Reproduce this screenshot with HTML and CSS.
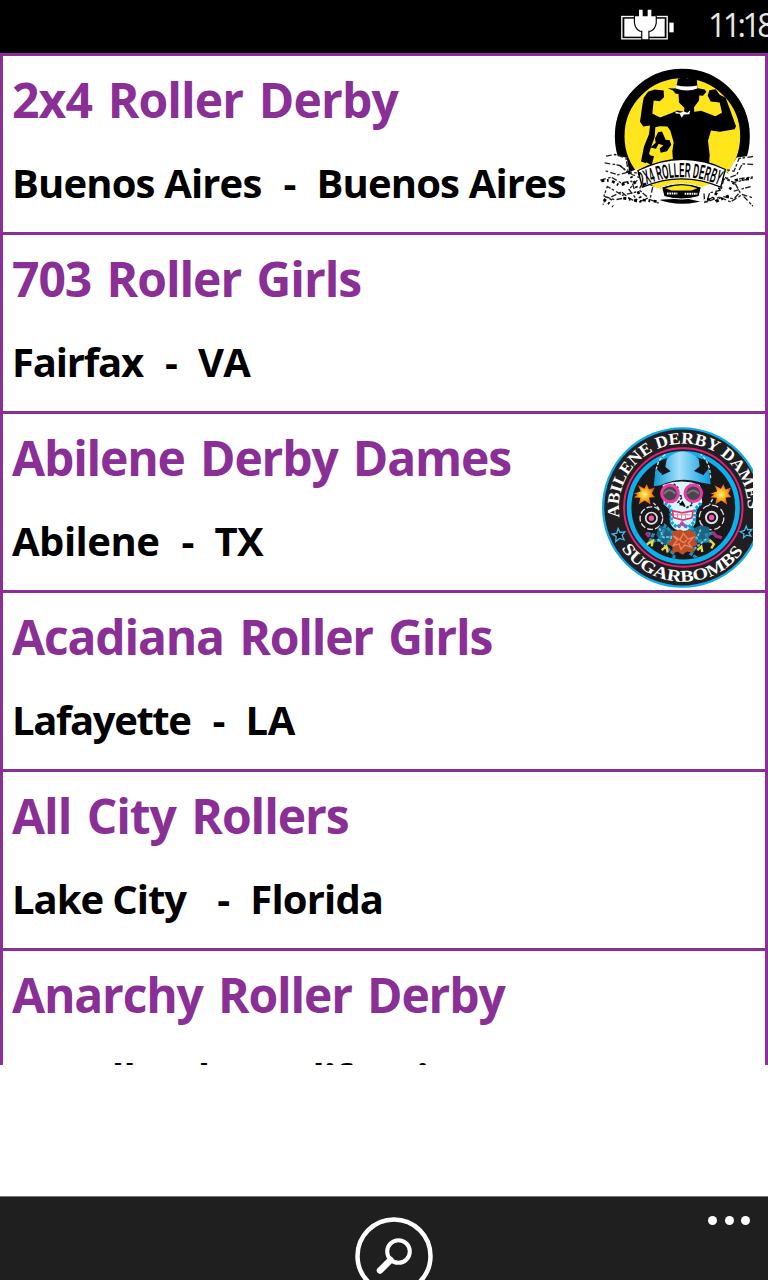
FILE: index.html
```html
<!DOCTYPE html>
<html lang="en">
<head>
<meta charset="utf-8">
<title>Roller Derby Leagues</title>
<link rel="stylesheet" href="styles.css">
</head>
<body>
<div class="phone">
  <header class="status">
    <svg class="battery" viewBox="93 28 162 93" aria-label="Charging">
      <rect x="95.500" y="50.500" width="136" height="67" fill="none" stroke="#fff" stroke-width="4"/>
      <rect x="103" y="57" width="121" height="54" fill="#fff"/>
      <rect x="238" y="69" width="13" height="29" fill="#fff"/>
      <path d="M147 30h11v20h15V30h11v20h13v20q-3 17-16 23h-6v26h-18V93h-6q-13-6-16-23V50h12z" fill="#fff" stroke="#000" stroke-width="7"/>
      <path d="M147 30h11v20h15V30h11v20h13v20q-3 17-16 23h-6v26h-18V93h-6q-13-6-16-23V50h12z" fill="#fff"/>
    </svg>
    <span class="time">11:18</span>
  </header>

  <main class="list">
    <article class="row">
      <div class="info">
        <h2 class="name t-normal">2x4 Roller Derby</h2>
        <p class="place"><span>Buenos Aires</span><span class="dash">-</span><span>Buenos Aires</span></p>
      </div>
      <svg class="logo logo-2x4" viewBox="30 40 459 425">
        <circle cx="277" cy="244" r="188" fill="#ffe51c" stroke="#000" stroke-width="29"/>
        <path d="M161 129l13-18 20-7 27 3 1 20-13 12-18-2-4 39 23 12 37-14 15-7 34 7 37-6 43 16 20-10-7-31-27-3-9-17 5-17 19-3 12 17 18 9 14 38 17 47-4 9-44 8-27-4-9 31 5 42-2 34H250l-3-45 4-27-10-34-9-13-23-1-13 3-2 30-11 30-15 48-15-5 9-45 15-37 3-26-20 3-10-14 7-50z"/>
        <path d="M265 108l2 35 16 16-1 19h31l-1-21 15-20 2-29z"/>
        <path d="M257 103l7-31 16-5 13 4 12-4 15 5 3 31z"/>
        <path d="M258 91q32 8 64 1v15q-32 9-65 0z" fill="#fff"/>
        <path d="M233 100l25 1q34 12 66-1l20 4 5 7-10 12-48-5-34-1-8-10z"/>
        <path d="M256 170l14 4 11-4 11 4 9-8-3 12-16 1-7 10-6-12-12-1z" fill="#fff"/>
        <path d="M204 232l12-2 11 25 12 1 5 14-13 19-19 5-3-13 11-9-14-5-8 15-17-4 16-14-2-13zM160 317l12-31 8 15 12 3-7 27z"/>
        <path d="M48 304l23-5 39 10 8 42 39-12 10 48 100 34 92-33 14-41 39 8 28-47 42-5v153l-31-1-30-15-30 4-38-10-20 7-44-10-73 3-42 10-27-4-43 7-32-14-31 8-38 5 10-30-22-17 3-21-5-29 19-12z" fill="#fff"/>
        <g fill="none" stroke="#222" stroke-width="4" stroke-dasharray="17 7 8 4">
          <path d="M48 304l28-5 32 11 7 42-31 8-41-13M44 324l46 8 21 18 33 5 16 23-13 27 28 24-31 14-32-15-38 7-26-9-9 24M31 376l33-9 29 17 32-5 11 33-39 9-45-26-10 28 24 13"/>
          <path d="M489 305l-42 6-15 38-40-7 6 29 34 12 57-14M489 329l-32-2-17 33-39 14-8 32-34 8-9 27 38-14 34 14 35-22 32 10M376 390l31-22 29 19 14 25-18 20-34-7-23 13M447 372l42-6M431 409l55-15M461 425l28 29"/>
          <path d="M91 334l35 25 35 14M64 426l30-15 28 23M142 376l-25 28 24 31M188 397l-8 37 26 11M342 416l2 26 28-17"/>
        </g>
        <g fill="none" stroke="#000" stroke-width="8" stroke-dasharray="9 8 5 11">
          <path d="M34 378l28-2 26 16 31-10M41 433l28 22M115 350l20 35 18 50 47 5M100 430l55 10M477 372l-40 4-18 28M400 351l-10 48-25 37-23-6M378 440l40-18"/>
        </g>
        <path d="M144 347q133-66 262-3l-14 53q-116-50-235 0z" fill="#fff" stroke="#000" stroke-width="4"/>
        <path id="derby-arc" d="M158 394Q277 340 394 394" fill="none"/>
        <text class="ribbon-text"><textPath href="#derby-arc" textLength="236" lengthAdjust="spacingAndGlyphs">2X4 ROLLER DERBY</textPath></text>
        <path d="M215 397q58-22 119 0l-7 28q-52 15-105 0z" stroke="#fff" stroke-width="3"/>
        <path d="M226 400q51-17 96 0l-17 7h-60z" fill="#ffe51c"/>
        <path d="M231 416h31m22 1h38" stroke="#fff" stroke-width="6" stroke-dasharray="5 2"/>
      </svg>
    </article>

    <article class="row">
      <div class="info">
        <h2 class="name t-snug">703 Roller Girls</h2>
        <p class="place"><span class="t-tight">Fairfax</span><span class="dash">-</span><span>VA</span></p>
      </div>
    </article>

    <article class="row">
      <div class="info">
        <h2 class="name t-tight">Abilene Derby Dames</h2>
        <p class="place"><span class="t-loose">Abilene</span><span class="dash">-</span><span class="t-loose">TX</span></p>
      </div>
      <svg class="logo logo-abilene" viewBox="30 33 459 490">
        <defs>
          <linearGradient id="helmet"><stop offset="0" stop-color="#0998d5"/><stop offset=".45" stop-color="#a7e0fb"/><stop offset="1" stop-color="#079bdf"/></linearGradient>
          <radialGradient id="spark"><stop offset="0" stop-color="#fff58a"/><stop offset=".45" stop-color="#ffb51c"/><stop offset="1" stop-color="#ed501c"/></radialGradient>
          <path id="abilene-arc" d="M88 308A194 194 0 1 1 472 308"/>
          <path id="sugar-arc" d="M94 401A223 223 0 0 0 466 401"/>
        </defs>
        <circle cx="277" cy="278" r="238" fill="#211f21" stroke="#0cacea" stroke-width="7"/>
        <circle cx="280" cy="278" r="178" fill="#211f21" stroke="#ec1d79" stroke-width="6"/>
        <circle cx="280" cy="278" r="163" fill="#19191b" stroke="#0cb0ed" stroke-width="14"/>
        <text class="badge-text"><textPath href="#abilene-arc" textLength="640" lengthAdjust="spacingAndGlyphs">ABILENE DERBY DAMES</textPath></text>
        <text class="badge-text"><textPath href="#sugar-arc" textLength="430" lengthAdjust="spacingAndGlyphs">SUGARBOMBS</textPath></text>
        <path d="M84 341l6 12 14-2-8 11 6 13-14-4-11 9 1-15-12-7 14-3zM469 334l4 11 13-1-9 10 6 10-13-3-9 8 1-12-11-6 13-4z" fill="#111" stroke="#42b9e8" stroke-width="4"/>
        <path d="M198 195q-4-59 30-77m134 72q-2-51-30-72M190 264l17 18m161-29l-14 26" fill="none" stroke="#ddd" stroke-width="4" stroke-dasharray="10 5"/>
        <path d="M230 132q48-44 96 0l5 36 12 9 14-17 5 48-29-5q-58-20-122 8l-20 3 6-55 15 16 12-8z" fill="url(#helmet)"/>
        <path d="M213 146l29 23-27 12zM342 144l-30 24 30 13z" fill="#15161a"/>
        <path d="M218 210q57-20 112 0l7 53-18 22-3 41q-14 23-39 23-29-3-36-24l1-39-21-18z" fill="#d9f6ff"/>
        <path d="M224 265l18 13 2 44 16 15 16-10 19 11 18-17 3-39 17-17" fill="none" stroke="#07a7df" stroke-width="10" stroke-dasharray="9 4"/>
        <path d="M251 207l12 11-7 16 21 12-13 17 27 15 17-9-10-18 8-25-16-5 14-14" fill="none" stroke="#192a35" stroke-width="5" stroke-dasharray="8 4"/>
        <circle cx="240" cy="236" r="25" fill="#48454c" stroke="#ed38a4" stroke-width="9"/>
        <circle cx="310" cy="235" r="25" fill="#48454c" stroke="#ed38a4" stroke-width="9"/>
        <path d="M222 237q16-21 34 0m36 0q18-20 34 0" stroke="#77747c" stroke-width="6" fill="none"/>
        <path d="M268 272l9-15 9 15z"/>
        <path d="M248 288l28 6 33-6-3 21-27 7-29-8z" fill="#fff" stroke="#e82e72" stroke-width="5"/>
        <path d="M253 300h49M263 291v20m12-18v20m12-20v20" stroke="#c98d9f" stroke-width="3"/>
        <g id="flash" fill="url(#spark)"><path d="M131 237l21-8-8-18 19 11 7-15 7 17 17-6-9 18 10 11-18 1 5 22-18-13-18 12 5-20-20-1 12-9z"/></g>
        <use href="#flash" x="230" y="0"/>
        <g fill="#19191b" stroke="#e5dfe3"><circle cx="184" cy="310" r="34" stroke-width="4" stroke-dasharray="18 6"/><circle cx="365" cy="308" r="37" stroke-width="4" stroke-dasharray="20 9"/><circle cx="184" cy="310" r="17" stroke-width="5"/><circle cx="365" cy="308" r="17" stroke-width="6"/></g>
        <g fill="#ed56a8"><circle cx="184" cy="310" r="8"/><circle cx="365" cy="308" r="8"/></g>
        <path d="M207 332l28 8 22 10-8 42-35-4-15-28zM300 345l33-14 25 6 3 26-25 25-29-7z" fill="#1c6384"/>
        <g fill="none" stroke-width="9">
          <path d="M169 355l20 5-10 20 31-4 15-43 24 22-14 28 30 8m105-37l-21 6 8 20-36-3-15-39-20 20 8 26-22 8M230 399l23 20-3 18m66-39l-13 20 19 12" stroke="#238db3" stroke-dasharray="13 3"/>
          <path d="M208 340l12 28 24-2-3 25m91-47l-10 25-23-3 5 22M203 373l30 28m116-29l-34 29" stroke="#6bcbed" stroke-width="5" stroke-dasharray="9 4"/>
          <path d="M168 354l10 13m191-15l9 12 18 5" stroke="#a9298c" stroke-width="10"/>
          <path d="M170 389l18-11-3 17m30 11l14-12 4 19m89-7l12-11 3 17m22-37l13 13-8 13" stroke="#e8d841" stroke-width="7"/>
        </g>
        <path d="M246 350l24-6 14 6 15-5 20 14-5 19 11 11-16 8 2 18-20-5-13 10-15-9-17 4 2-19-16-9 16-14z" fill="#bd4d27"/>
        <path d="M250 363l20 12 10-19 14 17 16-5-15 17 9 12-20-6-11 13-6-17-17 5 12-16zM269 376l13 8 9-8" fill="none" stroke="#ef855d" stroke-width="4"/>
        <path d="M266 338l10-14 12 14" fill="none" stroke="#ab4eb1" stroke-width="8"/>
      </svg>
    </article>

    <article class="row">
      <div class="info">
        <h2 class="name t-tight">Acadiana Roller Girls</h2>
        <p class="place"><span class="t-tightest">Lafayette</span><span class="dash">-</span><span class="t-loose">LA</span></p>
      </div>
    </article>

    <article class="row">
      <div class="info">
        <h2 class="name t-snug">All City Rollers</h2>
        <p class="place"><span class="t-snug">Lake City&nbsp;</span><span class="dash">-</span><span>Florida</span></p>
      </div>
    </article>

    <article class="row">
      <div class="info">
        <h2 class="name t-tight">Anarchy Roller Derby</h2>
        <p class="place"><span class="t-loose">Woodland</span><span class="dash">-</span><span>California</span></p>
      </div>
    </article>
  </main>

  <footer class="appbar">
    <svg class="search" viewBox="0 0 78 78" aria-label="Search">
      <g fill="none" stroke="#fff">
        <circle cx="39" cy="39" r="36.500" stroke-width="4.500"/>
        <circle cx="43.500" cy="34.500" r="11.300" stroke-width="4"/>
        <path d="M35.500 43L25 53.500" stroke-width="6.500" stroke-linecap="round"/>
      </g>
    </svg>
    <div class="more"><i></i><i></i><i></i></div>
  </footer>
</div>
</body>
</html>
```
FILE: styles.css
```css
* { box-sizing: border-box; }
body { margin: 0; background: #fff; font-family: "Open Sans", "Noto Sans", sans-serif; }
.phone { width: 768px; height: 1280px; overflow: hidden; display: flex; flex-direction: column; }
.status { flex: none; height: 53px; background: #000; color: #e8e8e8; display: flex; padding-left: 621px; overflow: hidden; }
.battery { flex: none; width: 54px; height: 31px; margin-top: 9px; }
.time { margin-left: 33px; font-size: 32px; line-height: 50px; letter-spacing: -3.5px; white-space: nowrap; }
.list { flex: none; height: 1012px; overflow: hidden; border: solid #892f96; border-width: 3px 3px 0; }
.row { height: 179.1px; border-bottom: 3px solid #892f96; display: flex; justify-content: space-between; padding: 0 12px 0 9px; }
.info { padding-top: 11px; white-space: nowrap; }
.name { margin: 0; height: 83px; line-height: 66px; font-size: 48px; font-weight: 700; color: #892f96; word-spacing: 4px; }
.place { margin: 0; display: flex; font-size: 40px; font-weight: 700; line-height: 66px; letter-spacing: -0.85px; }
.dash { margin: 0 21px 0 22px; }
.t-loose { letter-spacing: -0.5px; }
.t-normal { letter-spacing: -0.87px; }
.t-snug { letter-spacing: -1.05px; }
.t-tight { letter-spacing: -1.18px; }
.t-tightest { letter-spacing: -1.4px; }
.logo { flex: none; width: 153px; margin-top: 12px; }
.logo-2x4 { height: 142px; }
.logo-abilene { height: 163px; }
.ribbon-text { font: 700 62px "Liberation Sans", sans-serif; }
.badge-text { font: 700 50px "Liberation Serif", serif; fill: #fff; }
.appbar { flex: none; height: 84px; margin-top: auto; background: #1f1f1f; border-top: 1px solid #777; display: flex; justify-content: space-between; padding: 20px 18px 0 355px; overflow: hidden; }
.search { flex: none; width: 78px; height: 78px; }
.more { display: flex; gap: 7.500px; margin-top: -1px; }
.more i { width: 9px; height: 9px; border-radius: 50%; background: #fff; }
```
